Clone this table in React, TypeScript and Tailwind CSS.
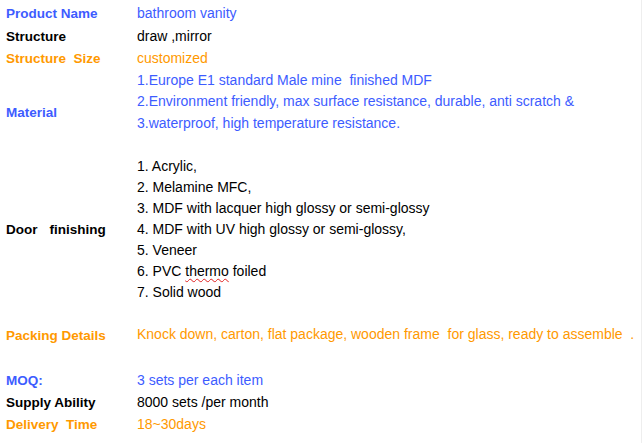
const BLUE = "text-[#3d5cff]";
const ORANGE = "text-[#ff9900]";
const BLACK = "text-black";

type Row = {
  label: React.ReactNode;
  color: string;
  lines: React.ReactNode[];
  lineH: string;
};

const rows: Row[] = [
  { label: "Product Name", color: BLUE, lineH: "h-[24px] leading-[24px]", lines: ["bathroom vanity"] },
  { label: "Structure", color: BLACK, lineH: "h-[22px] leading-[22px]", lines: ["draw ,mirror"] },
  { label: "Structure  Size", color: ORANGE, lineH: "h-[22px] leading-[22px]", lines: ["customized"] },
  {
    label: "Material",
    color: BLUE,
    lineH: "h-[21.5px] leading-[21.5px]",
    lines: [
      "1.Europe E1 standard Male mine  finished MDF",
      "2.Environment friendly, max surface resistance, durable, anti scratch &",
      "3.waterproof, high temperature resistance.",
      "",
    ],
  },
  {
    label: (
      <>
        Door<span className="ml-[12px]">finishing</span>
      </>
    ),
    color: BLACK,
    lineH: "h-[21px] leading-[21px]",
    lines: [
      "1. Acrylic,",
      "2. Melamine MFC,",
      "3. MDF with lacquer high glossy or semi-glossy",
      "4. MDF with UV high glossy or semi-glossy,",
      "5. Veneer",
      <>
        6. PVC{" "}
        <span className="underline decoration-wavy decoration-[#e02020] decoration-1 underline-offset-2">thermo</span>{" "}
        foiled
      </>,
      "7. Solid wood",
    ],
  },
  { label: "", color: BLACK, lineH: "h-[21px]", lines: [""] },
  {
    label: "Packing Details",
    color: ORANGE,
    lineH: "h-[21px] leading-[21px]",
    lines: ["Knock down, carton, flat package, wooden frame  for glass, ready to assemble  ."],
  },
  { label: "", color: BLACK, lineH: "h-[23px]", lines: [""] },
  { label: "MOQ:", color: BLUE, lineH: "h-[22px] leading-[22px]", lines: ["3 sets per each item"] },
  { label: "Supply Ability", color: BLACK, lineH: "h-[22px] leading-[22px]", lines: ["8000 sets /per month"] },
  { label: "Delivery  Time", color: ORANGE, lineH: "h-[22px] leading-[22px]", lines: ["18~30days"] },
];

export default function App() {
  return (
    <div className="h-[443px] w-[642px] overflow-hidden border-r border-[#eeeeee] bg-white pt-[1px] font-['Liberation_Sans',Arial,sans-serif]">
      {rows.map((row, i) => (
        <div key={i} className="flex items-center">
          <div className={`w-[137px] shrink-0 whitespace-pre pl-[6px] pt-[2px] text-[13.5px] font-bold ${row.color}`}>
            {row.label}
          </div>
          <div className={`flex flex-col text-[14px] ${row.color}`}>
            {row.lines.map((line, j) => (
              <div key={j} className={`whitespace-pre ${row.lineH}`}>
                {line}
              </div>
            ))}
          </div>
        </div>
      ))}
    </div>
  );
}
